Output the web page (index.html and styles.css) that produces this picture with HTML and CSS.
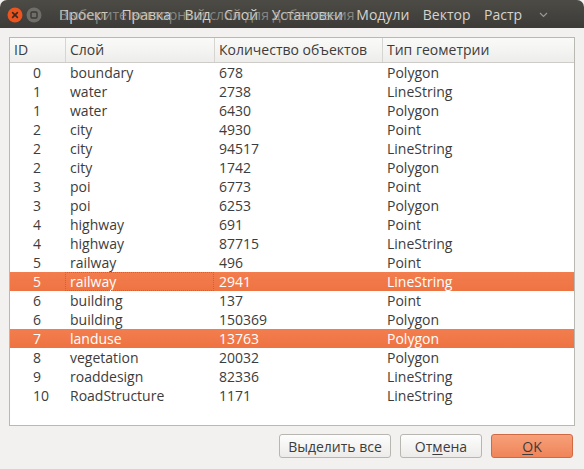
FILE: index.html
```html
<!DOCTYPE html>
<html>
<head>
<meta charset="utf-8">
<link rel="stylesheet" href="styles.css">
</head>
<body>
<div class="window">
  <div class="titlebar">
    <div class="wbtn close"><svg width="16" height="16" viewBox="0 0 16 16"><circle cx="8" cy="8" r="7.5" fill="#e9541f"/><path d="M5.6 5.6 L10.4 10.4 M10.4 5.6 L5.6 10.4" stroke="#3c2a22" stroke-width="1.6" stroke-linecap="round"/></svg></div>
    <div class="wbtn max"><svg width="16" height="16" viewBox="0 0 16 16"><circle cx="8" cy="8" r="7.5" fill="#6f6e69"/><rect x="5" y="5" width="6" height="6" rx="1" fill="none" stroke="#3a3935" stroke-width="1.4"/></svg></div>
    <div class="titlearea">
      <div class="menu">
        <span>Проект</span><span>Правка</span><span>Вид</span><span>Слой</span><span>Установки</span><span>Модули</span><span>Вектор</span><span>Растр</span>
        <svg class="chev" width="9" height="6" viewBox="0 0 9 6"><path d="M1 1 L4.5 4.5 L8 1" fill="none" stroke="#9a9892" stroke-width="1.2"/></svg>
      </div>
      <div class="wintitle">Выберите векторный слой для добавления</div>
    </div>
  </div>
  <div class="content">
    <div class="tree">
      <div class="row head">
        <div class="c id">ID</div><div class="c">Слой</div><div class="c">Количество объектов</div><div class="c">Тип геометрии</div>
      </div>
      <div class="body">
        <div class="row"><div class="c id">0</div><div class="c">boundary</div><div class="c">678</div><div class="c">Polygon</div></div>
        <div class="row"><div class="c id">1</div><div class="c">water</div><div class="c">2738</div><div class="c">LineString</div></div>
        <div class="row"><div class="c id">1</div><div class="c">water</div><div class="c">6430</div><div class="c">Polygon</div></div>
        <div class="row"><div class="c id">2</div><div class="c">city</div><div class="c">4930</div><div class="c">Point</div></div>
        <div class="row"><div class="c id">2</div><div class="c">city</div><div class="c">94517</div><div class="c">LineString</div></div>
        <div class="row"><div class="c id">2</div><div class="c">city</div><div class="c">1742</div><div class="c">Polygon</div></div>
        <div class="row"><div class="c id">3</div><div class="c">poi</div><div class="c">6773</div><div class="c">Point</div></div>
        <div class="row"><div class="c id">3</div><div class="c">poi</div><div class="c">6253</div><div class="c">Polygon</div></div>
        <div class="row"><div class="c id">4</div><div class="c">highway</div><div class="c">691</div><div class="c">Point</div></div>
        <div class="row"><div class="c id">4</div><div class="c">highway</div><div class="c">87715</div><div class="c">LineString</div></div>
        <div class="row"><div class="c id">5</div><div class="c">railway</div><div class="c">496</div><div class="c">Point</div></div>
        <div class="row sel"><div class="c id">5</div><div class="c focus">railway</div><div class="c">2941</div><div class="c">LineString</div></div>
        <div class="row"><div class="c id">6</div><div class="c">building</div><div class="c">137</div><div class="c">Point</div></div>
        <div class="row"><div class="c id">6</div><div class="c">building</div><div class="c">150369</div><div class="c">Polygon</div></div>
        <div class="row sel"><div class="c id">7</div><div class="c">landuse</div><div class="c">13763</div><div class="c">Polygon</div></div>
        <div class="row"><div class="c id">8</div><div class="c">vegetation</div><div class="c">20032</div><div class="c">Polygon</div></div>
        <div class="row"><div class="c id">9</div><div class="c">roaddesign</div><div class="c">82336</div><div class="c">LineString</div></div>
        <div class="row"><div class="c id">10</div><div class="c">RoadStructure</div><div class="c">1171</div><div class="c">LineString</div></div>
      </div>
    </div>
    <div class="buttons">
      <button class="btn b1">Выделить все</button>
      <button class="btn b2">От<u>м</u>ена</button>
      <button class="btn ok"><u>O</u>K</button>
    </div>
  </div>
</div>
</body>
</html>
```
FILE: styles.css
```css
html, body {
  margin: 0;
  padding: 0;
  background: #f2f1f0;
}
body {
  width: 584px;
  height: 469px;
  overflow: hidden;
  font-family: "Open Sans", "Noto Sans", "DejaVu Sans", sans-serif;
  font-size: 14px;
  color: #3c3c3c;
}
.window {
  width: 584px;
  height: 469px;
  display: flex;
  flex-direction: column;
}
.titlebar {
  height: 28px;
  background: linear-gradient(#4c4b46, #3c3b37);
  border-radius: 7px 7px 0 0;
  display: flex;
  align-items: center;
  padding-left: 7px;
  gap: 3px;
  box-sizing: border-box;
  padding-top: 1px;
}
.wbtn { width: 16px; height: 16px; display: flex; }
.titlearea {
  position: relative;
  margin-left: 14px;
  flex: 1;
  height: 20px;
}
.menu {
  display: flex;
  align-items: center;
  gap: 13.5px;
  color: #d6d3cc;
  font-size: 14px;
  line-height: 20px;
}
.menu .chev { margin-left: 3px; }
.wintitle {
  position: absolute;
  left: 0;
  top: 0;
  color: #a5a39d;
  font-size: 14px;
  line-height: 20px;
  opacity: 0.7;
  white-space: nowrap;
}
.content {
  flex: 1;
  padding: 9px 9px 0 9px;
  display: flex;
  flex-direction: column;
}
.tree {
  height: 389px;
  border: 1px solid #b9b8b3;
  background: #fff;
  box-sizing: border-box;
  display: flex;
  flex-direction: column;
}
.row {
  display: grid;
  grid-template-columns: 55px 149px 168px 192px;
  height: 19px;
  line-height: 19px;
}
.row.head {
  height: 25px;
  line-height: 24px;
  background: linear-gradient(#fafaf9, #eeedeb);
  border-bottom: 1px solid #cdccc8;
  box-sizing: border-box;
}
.row.head .c { padding-left: 4px; }
.row.head .c + .c { border-left: 1px solid #d6d5d1; }
.c {
  padding-left: 5px;
  white-space: nowrap;
  overflow: hidden;
  box-sizing: border-box;
}
.c.id { padding-left: 23px; }
.row.sel {
  background: linear-gradient(#f37d4e, #ee7342);
  color: #ffffff;
}
.c.focus { outline: 1px dotted #b8694a; outline-offset: -1px; }
.buttons {
  display: flex;
  justify-content: flex-end;
  gap: 9px;
  margin-top: 8px;
  margin-right: 2px;
}
.btn {
  height: 24px;
  font-family: inherit;
  font-size: 14px;
  color: #3c3c3c;
  border: 1px solid #b7b6b1;
  border-radius: 3px;
  background: linear-gradient(#fdfdfd, #ecebe9);
  padding: 0;
}
.b1 { width: 112px; }
.b2 { width: 82px; }
.ok {
  width: 82px;
  background: linear-gradient(#f7a07a, #f08458);
  border-color: #d06a44;
}
u { text-decoration-thickness: 1px; text-underline-offset: 2px; }
```
